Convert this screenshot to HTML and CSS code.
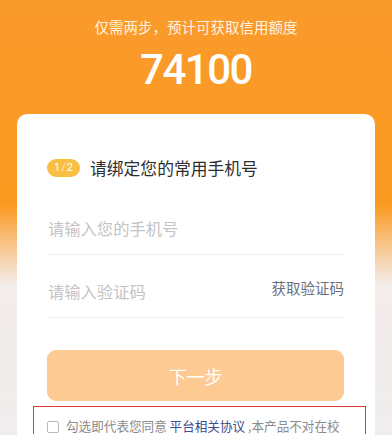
FILE: index.html
```html
<!DOCTYPE html>
<html lang="zh-CN">
<head>
    <meta charset="UTF-8">
    <meta name="viewport" content="width=device-width, initial-scale=1.0">
    <title>额度申请</title>
    <link rel="stylesheet" href="styles.css">
</head>
<body>
    <div class="header">
        <p class="subtitle">仅需两步，预计可获取信用额度</p>
        <p class="amount">74100</p>
    </div>
    <div class="card">
        <div class="step">
            <span class="badge">1<i>/</i>2</span>
            <span class="step-title">请绑定您的常用手机号</span>
        </div>
        <div class="field">
            <input type="text" placeholder="请输入您的手机号">
        </div>
        <div class="field">
            <input type="text" placeholder="请输入验证码">
            <span class="get-code">获取验证码</span>
        </div>
        <button class="next">下一步</button>
        <div class="agree">
            <span class="checkbox"></span>
            <span class="agree-text">勾选即代表您同意 <a href="#">平台相关协议</a> ,本产品不对在校</span>
        </div>
    </div>
</body>
</html>
```

FILE: styles.css
```css
body {
    margin: 0;
    height: 435px;
    overflow: hidden;
    font-family: "Noto Sans CJK SC", "Noto Sans", sans-serif;
    background: linear-gradient(to bottom, #f99a2c 0, #fb9a20 205px, #f8c58a 245px, #f2ecea 285px, #efeded 100%);
}
.header {
    padding-top: 16px;
    text-align: center;
    color: #fff;
}
.subtitle {
    margin: 0;
    font-size: 14.5px;
    line-height: 22px;
    color: #fff3e0;
}
.amount {
    margin: 10px 0 0;
    font-family: Roboto, "DejaVu Sans", sans-serif;
    font-weight: 500;
    font-size: 42px;
    line-height: 44px;
    letter-spacing: -1.5px;
    height: 44px;
}
.card {
    margin: 22px 17px 0;
    height: 321px;
    background: #fff;
    border-radius: 10px 10px 0 0;
    padding: 45px 31px 0 30px;
    box-sizing: border-box;
}
.step {
    display: flex;
    align-items: center;
    height: 18px;
}
.badge {
    width: 33px;
    height: 18px;
    border-radius: 9px;
    background: #f8bf45;
    color: #fff;
    font-family: Roboto, sans-serif;
    font-size: 11px;
    line-height: 18px;
    text-align: center;
}
.badge i {
    font-style: normal;
    opacity: 0.7;
    margin: 0 1px;
}
.step-title {
    margin-left: 10px;
    font-size: 16.8px;
    color: #2e2e2e;
}
.field {
    display: flex;
    align-items: center;
    justify-content: space-between;
    height: 62px;
    padding-top: 15px;
    border-bottom: 1px solid #eeeeee;
}
.field + .field {
    padding-top: 0;
}
.field input {
    flex: 1;
    min-width: 0;
    border: none;
    outline: none;
    padding: 0 0 0 1px;
    margin-top: 9px;
    font-family: inherit;
    font-size: 16.3px;
    color: #333;
    background: transparent;
}
.field input::placeholder {
    color: #c4c4c4;
}
.get-code {
    margin-top: 2px;
    font-size: 14.5px;
    color: #6a6f80;
}
.next {
    display: block;
    width: 100%;
    height: 51px;
    margin-top: 32px;
    border: none;
    border-radius: 9px;
    background: #fdca93;
    color: #fff;
    font-family: inherit;
    font-size: 18px;
}
.agree {
    display: flex;
    align-items: flex-start;
    margin: 5px -22px 0 -14px;
    height: 28px;
    padding: 6px 0 0 13px;
    border: 1px solid #dc3a35;
    border-bottom: none;
    box-sizing: border-box;
}
.checkbox {
    width: 10px;
    height: 10px;
    margin-top: 8px;
    border: 1px solid #b8b8b8;
    border-radius: 2px;
    flex-shrink: 0;
}
.agree-text {
    margin-left: 7px;
    font-size: 12.6px;
    line-height: 26px;
    color: #8a8a8a;
    white-space: nowrap;
}
.agree-text a {
    color: #3b4d8c;
    text-decoration: none;
}
```
